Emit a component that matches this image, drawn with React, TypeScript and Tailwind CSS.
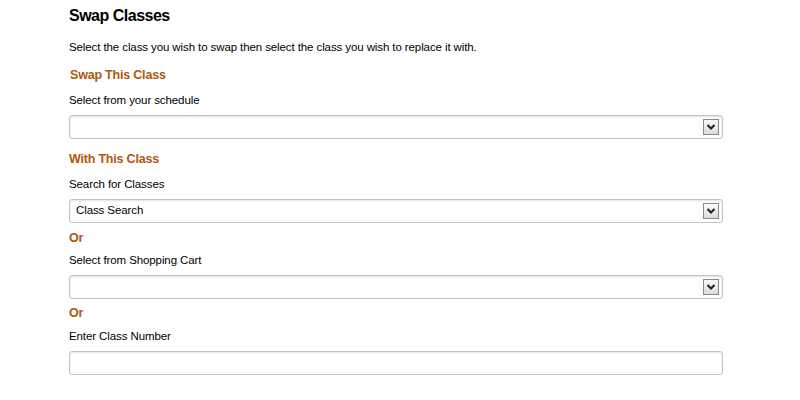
import React from "react";

const Arrow = () => (
  <div className="w-[16px] h-[16px] border border-[#8a8a8a] bg-gradient-to-b from-[#fafafa] to-[#dcdcdc] flex items-center justify-center">
    <svg width="10" height="8" viewBox="0 0 10 8">
      <path d="M1.5 2 L5 5.5 L8.5 2" fill="none" stroke="#222" strokeWidth="2" />
    </svg>
  </div>
);

const SelectBox = ({ text }: { text?: string }) => (
  <div className="h-[24px] w-[654px] border border-[#c4c4c4] rounded-[3px] bg-white shadow-[inset_0_1px_2px_rgba(0,0,0,0.12)] flex items-center justify-between pl-[6px] pr-[3px] text-[11.5px] tracking-[-0.1px] text-black">
    <span>{text ?? ""}</span>
    <Arrow />
  </div>
);

const InputBox = () => (
  <div className="h-[24px] w-[654px] border border-[#c4c4c4] rounded-[3px] bg-white shadow-[inset_0_1px_2px_rgba(0,0,0,0.12)]" />
);

const Label = ({ children, mt }: { children: React.ReactNode; mt: string }) => (
  <div className={`h-[20px] leading-[20px] text-[11.5px] tracking-[-0.1px] text-black ${mt}`}>{children}</div>
);

const Head = ({ children, mt }: { children: React.ReactNode; mt: string }) => (
  <div className={`h-[20px] leading-[20px] text-[12.5px] tracking-[-0.2px] font-bold text-[#b0570f] ${mt}`}>{children}</div>
);

export default function App() {
  return (
    <div
      className="w-[800px] h-[400px] bg-white pl-[69px]"
      style={{ fontFamily: '"Liberation Sans", Arial, sans-serif' }}
    >
      <div className="h-[32px] leading-[32px] text-[16px] tracking-[-0.5px] font-bold text-black">Swap Classes</div>
      <Label mt="mt-[5px]">
        Select the class you wish to swap then select the class you wish to replace it with.
      </Label>
      <Head mt="mt-[8px] pl-[1px]">Swap This Class</Head>
      <Label mt="mt-[5px]">Select from your schedule</Label>
      <div className="mt-[5px]">
        <SelectBox />
      </div>
      <Head mt="mt-[10px]">With This Class</Head>
      <Label mt="mt-[5px]">Search for Classes</Label>
      <div className="mt-[5px]">
        <SelectBox text="Class Search" />
      </div>
      <Head mt="mt-[5px]">Or</Head>
      <Label mt="mt-[2px]">Select from Shopping Cart</Label>
      <div className="mt-[5px]">
        <SelectBox />
      </div>
      <Head mt="mt-[4px]">Or</Head>
      <Label mt="mt-[3px]">Enter Class Number</Label>
      <div className="mt-[5px]">
        <InputBox />
      </div>
    </div>
  );
}
